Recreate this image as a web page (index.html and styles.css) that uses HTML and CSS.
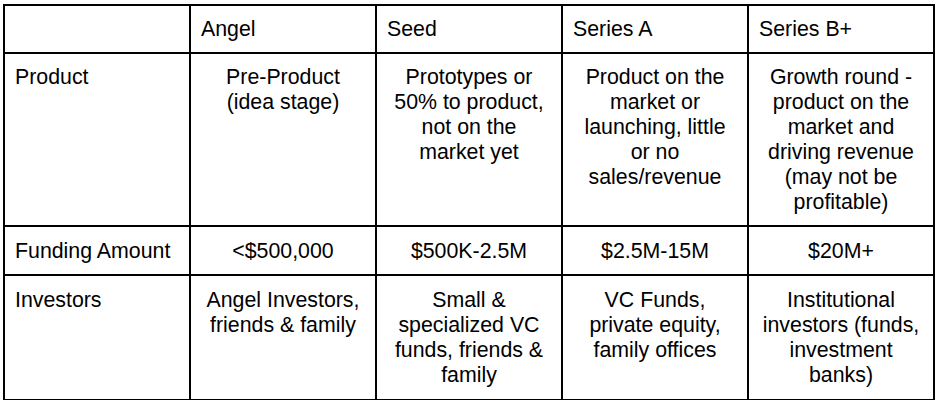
FILE: index.html
```html
<!DOCTYPE html>
<html lang="en">
<head>
<meta charset="utf-8">
<title>Funding stages</title>
<link rel="stylesheet" href="styles.css">
</head>
<body>
<table class="stages">
  <colgroup>
    <col class="col"><col class="col"><col class="col"><col class="col"><col class="col">
  </colgroup>
  <tr class="head">
    <td></td>
    <td>Angel</td>
    <td>Seed</td>
    <td>Series A</td>
    <td>Series B+</td>
  </tr>
  <tr class="tall">
    <td class="label">Product</td>
    <td class="val">Pre-Product (idea stage)</td>
    <td class="val">Prototypes or 50% to product, not on the market yet</td>
    <td class="val">Product on the market or launching, little or no sales/revenue</td>
    <td class="val">Growth round - product on the market and driving revenue (may not be profitable)</td>
  </tr>
  <tr>
    <td class="label">Funding Amount</td>
    <td class="val">&lt;$500,000</td>
    <td class="val">$500K-2.5M</td>
    <td class="val">$2.5M-15M</td>
    <td class="val">$20M+</td>
  </tr>
  <tr class="last">
    <td class="label">Investors</td>
    <td class="val">Angel Investors, friends &amp; family</td>
    <td class="val">Small &amp; specialized VC funds, friends &amp; family</td>
    <td class="val">VC Funds, private equity, family offices</td>
    <td class="val">Institutional investors (funds, investment banks)</td>
  </tr>
</table>
</body>
</html>
```
FILE: styles.css
```css
html, body {
  margin: 0;
  padding: 0;
  background: #ffffff;
}

body {
  padding: 4px 0 0 3px;
  font-family: "Liberation Sans", Arial, sans-serif;
  font-size: 21.33px;
  line-height: 25px;
  color: #000000;
}

.stages {
  border-collapse: collapse;
  table-layout: fixed;
  width: 932px;
}

.stages .col {
  width: 186px;
}

.stages td {
  border: 2px solid #000000;
  padding: 12px 10px 10px;
  vertical-align: top;
  text-align: left;
}

.stages .head td,
.stages .tall td {
  padding-top: 11px;
  padding-bottom: 10px;
}

.stages .last td {
  padding-bottom: 11px;
}

.stages td.val {
  text-align: center;
}
```
